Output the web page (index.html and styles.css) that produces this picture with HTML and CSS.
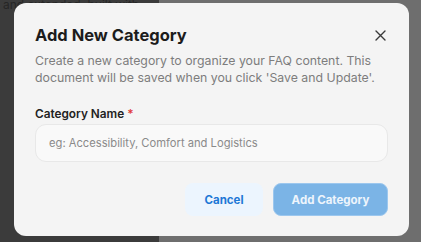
FILE: index.html
```html
<!DOCTYPE html>
<html lang="en">
<head>
  <meta charset="UTF-8">
  <title>Add New Category</title>
  <link rel="stylesheet" href="styles.css">
</head>
<body>

  <!-- Page behind the overlay -->
  <div class="page">
    <aside class="page-side">
      <p>and extended, built with</p>
    </aside>
    <main class="page-main"></main>
  </div>

  <!-- Modal -->
  <div class="modal">
    <div class="modal-head">
      <h2>Add New Category</h2>
      <button class="close" aria-label="Close">
        <svg width="11" height="11" viewBox="0 0 11 11">
          <path d="M1 1 L10 10 M10 1 L1 10" stroke="#3a3a3a" stroke-width="1.4" stroke-linecap="round"/>
        </svg>
      </button>
    </div>
    <p class="modal-desc">Create a new category to organize your FAQ content. This document will be saved when you click 'Save and Update'.</p>

    <label class="field-label" for="categoryName">Category Name <span class="req">*</span></label>
    <input type="text" id="categoryName" class="field-input" placeholder="eg: Accessibility, Comfort and Logistics">

    <div class="modal-actions">
      <button class="btn btn-cancel">Cancel</button>
      <button class="btn btn-add">Add Category</button>
    </div>
  </div>

</body>
</html>
```

FILE: styles.css
```css
/* Basic Reset */
* {
  margin: 0;
  padding: 0;
  box-sizing: border-box;
}

body {
  font-family: Inter, "Noto Sans", sans-serif;
  width: 421px;
  height: 242px;
  overflow: hidden;
  position: relative;
}

/* Background page (dimmed) */
.page {
  display: flex;
  height: 242px;
}

.page-side {
  width: 159px;
  background-color: #3b3b3b;
}

.page-side p {
  color: #262626;
  font-size: 12px;
  padding-left: 3px;
  line-height: 10px;
  white-space: nowrap;
}

.page-main {
  flex: 1;
  background-color: #6e6e6e;
}

/* Modal */
.modal {
  position: absolute;
  top: 3px;
  left: 14px;
  width: 395px;
  height: 233px;
  background-color: #f4f4f4;
  border-radius: 12px;
  padding: 22px 21px 20px 21px;
}

.modal-head {
  display: flex;
  justify-content: space-between;
  align-items: center;
}

.modal-head h2 {
  font-size: 16.5px;
  font-weight: 700;
  color: #1c1c1c;
  line-height: 20px;
}

.close {
  border: none;
  background: none;
  width: 11px;
  height: 11px;
  margin-right: 2px;
  display: flex;
}

.modal-desc {
  margin-top: 7px;
  font-size: 12.3px;
  line-height: 17px;
  color: #7d7d7d;
}

.field-label {
  display: block;
  margin-top: 21px;
  font-size: 11.8px;
  font-weight: 600;
  color: #222;
  line-height: 14px;
}

.req {
  color: #e03a3a;
}

.field-input {
  display: block;
  width: 353px;
  height: 38px;
  margin-top: 3px;
  border: 1px solid #e8e8e8;
  border-radius: 11px;
  background-color: #f9f9f9;
  padding: 0 13px;
  font-family: inherit;
  font-size: 11.2px;
  color: #333;
}

.field-input::placeholder {
  color: #8a8a8a;
}

.modal-actions {
  display: flex;
  justify-content: flex-end;
  gap: 10px;
  margin-top: 21px;
}

.btn {
  height: 33px;
  border: none;
  border-radius: 8px;
  font-family: inherit;
  font-size: 11.5px;
  font-weight: 700;
  cursor: pointer;
}

.btn-cancel {
  width: 78px;
  background-color: #ecf5fe;
  color: #1e78d6;
}

.btn-add {
  width: 115px;
  background-color: #7bb4e6;
  color: #eef5fc;
  border: 1px solid #9cc7ee;
}
```
